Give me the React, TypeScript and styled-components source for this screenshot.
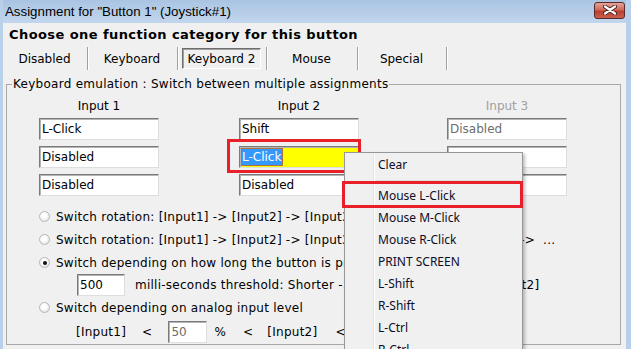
import styled, { createGlobalStyle } from "styled-components";

const Global = createGlobalStyle`
  html, body { margin: 0; padding: 0; background: #f0f0f0; }
  * { box-sizing: border-box; }
`;

const UI = `"DejaVu Sans", sans-serif`;

const Window = styled.div`
  position: relative;
  width: 631px;
  height: 349px;
  overflow: hidden;
  display: flex;
  flex-direction: column;
  background: #f0f0f0;
  border-left: 3px solid #b9d0ea;
  border-right: 5px solid #b9d0ea;
  font-family: ${UI};
  font-size: 12px;
  color: #000;
`;

const TitleBar = styled.div`
  height: 23px;
  flex: none;
  display: flex;
  align-items: center;
  justify-content: space-between;
  padding-left: 2px;
  background: linear-gradient(#a9c4e2, #c2d6ee);
  font-family: "Liberation Sans", sans-serif;
  font-size: 13.3px;
`;

const CloseButton = styled.div`
  width: 31px;
  height: 17px;
  margin: 0 1px 3px 0;
  border: 1px solid #5b2a2a;
  border-radius: 3px;
  display: flex;
  align-items: center;
  justify-content: center;
  background: linear-gradient(#e3a497, #cf6a5a 45%, #b9402f 55%, #c9604c);
`;

const Body = styled.div`
  flex: 1;
  display: flex;
  flex-direction: column;
`;

const Heading = styled.div`
  margin: 4px 0 0 6px;
  height: 16px;
  line-height: 16px;
  font-weight: bold;
  font-size: 13px;
  letter-spacing: 0.42px;
`;

const TabRow = styled.div`
  margin-top: 4px;
  height: 23px;
  display: grid;
  grid-template-columns: 85px 90px 89px 91px 89px;
`;

const Tab = styled.div`
  display: flex;
  align-items: center;
  justify-content: center;
  border-right: 1px solid #a0a0a0;
  box-shadow: 1px 0 0 #fff;
  padding: 1px 5px 1px 4px;
`;

const TabFace = styled.div<{ $pressed?: boolean }>`
  width: 100%;
  height: 100%;
  display: flex;
  align-items: center;
  justify-content: center;
  border: 1px solid transparent;
  ${(p) =>
    p.$pressed &&
    `border-color: #6e6e6e #fff #fff #6e6e6e;
     box-shadow: inset 1px 1px 0 #a0a0a0;`}
`;

const Group = styled.fieldset`
  margin: 7px 5px 0 3px;
  padding: 0;
  border: 1px solid #a8a8a8;
  height: 268px;
  min-width: 0;
`;

const Legend = styled.legend`
  margin-left: 5px;
  padding: 0 1px;
  line-height: 14px;
  letter-spacing: 0.27px;
`;

const InputGrid = styled.div`
  margin: 7px 0 0 32px;
  display: grid;
  grid-template-columns: 200px 208px 120px;
  row-gap: 6px;
`;

const ColLabel = styled.div<{ $dim?: boolean }>`
  width: 120px;
  text-align: center;
  height: 16px;
  line-height: 16px;
  margin-bottom: -2px;
  color: ${(p) => (p.$dim ? "#a0a0a0" : "#000")};
`;

const Field = styled.div<{ $w?: number; $bg?: string; $dim?: boolean }>`
  width: ${(p) => p.$w ?? 120}px;
  height: 22px;
  border: 1px solid;
  border-color: #7a7a7a #dedede #dedede #7a7a7a;
  box-shadow: inset 1px 1px 0 #b4b4b4;
  background: ${(p) => p.$bg ?? "#fff"};
  color: ${(p) => (p.$dim ? "#6d6d6d" : "#000")};
  padding-left: 2px;
  line-height: 20px;
  letter-spacing: 0;
  white-space: nowrap;
  overflow: hidden;
`;

const Selected = styled.span`
  background: #3399ff;
  color: #fff;
  padding: 1px 1px 1px 0;
  outline: 1px solid #b07040;
`;

const Options = styled.div`
  margin: 9px 0 0 32px;
  display: flex;
  flex-direction: column;
  letter-spacing: 0.25px;
`;

const OptionRow = styled.div<{ $h?: number; $indent?: number; $top?: number }>`
  height: ${(p) => p.$h ?? 23}px;
  margin-top: ${(p) => p.$top ?? 0}px;
  display: flex;
  align-items: center;
  padding-left: ${(p) => p.$indent ?? 0}px;
  white-space: pre;
`;

const Radio = styled.span<{ $on?: boolean }>`
  position: relative;
  flex: none;
  width: 11px;
  height: 11px;
  margin-right: 6px;
  border-radius: 50%;
  border: 1px solid #b8b8b8;
  background: radial-gradient(circle at 45% 40%, #fff 30%, #e2e2e2 80%);
  &::after {
    content: "";
    display: ${(p) => (p.$on ? "block" : "none")};
    position: absolute;
    left: 2.5px;
    top: 2.5px;
    width: 4px;
    height: 4px;
    border-radius: 50%;
    background: #111;
  }
`;

const Token = styled.span<{ $ml?: number }>`
  margin-left: ${(p) => p.$ml ?? 0}px;
  flex: none;
`;

const Menu = styled.div`
  position: absolute;
  left: 341px;
  top: 152px;
  width: 179px;
  height: 220px;
  background: #f0f0f0;
  border: 1px solid #979797;
  box-shadow: 2px 2px 3px rgba(0, 0, 0, 0.25);
  padding: 1px 0;
  font-family: "Noto Sans", sans-serif;
  font-size: 12px;
  color: #0d0d25;
  &::before {
    content: "";
    position: absolute;
    left: 28px;
    top: 1px;
    bottom: 0;
    width: 1px;
    background: #e2e3e3;
    box-shadow: 1px 0 0 #fff;
  }
`;

const MenuItem = styled.div`
  height: 22px;
  line-height: 22px;
  padding-left: 33px;
`;

const MenuSep = styled.div`
  height: 9px;
  display: flex;
  align-items: center;
  padding-left: 31px;
  &::after {
    content: "";
    flex: 1;
    margin-right: 2px;
    border-top: 1px solid #e0e0e0;
    border-bottom: 1px solid #fff;
  }
`;

const Highlight = styled.div<{ $x: number; $y: number; $w: number; $h: number }>`
  position: absolute;
  left: ${(p) => p.$x}px;
  top: ${(p) => p.$y}px;
  width: ${(p) => p.$w}px;
  height: ${(p) => p.$h}px;
  border: 3px solid #e8202a;
  pointer-events: none;
`;

const menuItems = [
  "Mouse L-Click",
  "Mouse M-Click",
  "Mouse R-Click",
  "PRINT SCREEN",
  "L-Shift",
  "R-Shift",
  "L-Ctrl",
  "R-Ctrl",
];

export default function App() {
  return (
    <Window>
      <Global />
      <TitleBar>
        <span>Assignment for "Button 1" (Joystick#1)</span>
        <CloseButton>
          <svg width="14" height="10" viewBox="0 0 14 10">
            <path d="M2 1.5 L12 8.5 M12 1.5 L2 8.5" stroke="#4a2020" strokeWidth="4" strokeLinecap="round" />
            <path d="M2 1.5 L12 8.5 M12 1.5 L2 8.5" stroke="#fff" strokeWidth="2.2" strokeLinecap="round" />
          </svg>
        </CloseButton>
      </TitleBar>
      <Body>
        <Heading>Choose one function category for this button</Heading>
        <TabRow>
          <Tab><TabFace>Disabled</TabFace></Tab>
          <Tab><TabFace>Keyboard</TabFace></Tab>
          <Tab><TabFace $pressed>Keyboard 2</TabFace></Tab>
          <Tab><TabFace>Mouse</TabFace></Tab>
          <Tab><TabFace>Special</TabFace></Tab>
        </TabRow>
        <Group>
          <Legend>Keyboard emulation : Switch between multiple assignments</Legend>
          <InputGrid>
            <ColLabel>Input 1</ColLabel>
            <ColLabel>Input 2</ColLabel>
            <ColLabel $dim>Input 3</ColLabel>
            <Field>L-Click</Field>
            <Field>Shift</Field>
            <Field $dim>Disabled</Field>
            <Field>Disabled</Field>
            <Field $bg="#ffff00">
              <Selected>L-Click</Selected>
            </Field>
            <Field />
            <Field>Disabled</Field>
            <Field>Disabled</Field>
            <Field />
          </InputGrid>
          <Options>
            <OptionRow>
              <Radio />
              Switch rotation: [Input1] -&gt; [Input2] -&gt; [Input3] -&gt; [Input1]
            </OptionRow>
            <OptionRow>
              <Radio />
              Switch rotation: [Input1] -&gt; [Input2] -&gt; [Input3] -&gt; [Input2] -&gt; [Input1]
              <Token $ml={19}>-&gt;  ...</Token>
            </OptionRow>
            <OptionRow>
              <Radio $on />
              Switch depending on how long the button is pressed
            </OptionRow>
            <OptionRow $h={22} $indent={38}>
              <Field $w={48}>500</Field>
              <Token $ml={10}>milli-seconds threshold: Shorter -&gt; [Input1],  Longer -&gt;  [Input2]</Token>
            </OptionRow>
            <OptionRow>
              <Radio />
              Switch depending on analog input level
            </OptionRow>
            <OptionRow $h={22} $indent={37} $top={2}>
              <Token>[Input1]</Token>
              <Token $ml={16}>&lt;</Token>
              <Token $ml={16}>
                <Field $w={39} $dim>50</Field>
              </Token>
              <Token $ml={7}>%</Token>
              <Token $ml={17}>&lt;</Token>
              <Token $ml={14}>[Input2]</Token>
              <Token $ml={18}>&lt;</Token>
            </OptionRow>
          </Options>
        </Group>
      </Body>
      <Highlight $x={224} $y={139} $w={134} $h={34} />
      <Menu>
        <MenuItem>Clear</MenuItem>
        <MenuSep />
        {menuItems.map((m) => (
          <MenuItem key={m}>{m}</MenuItem>
        ))}
      </Menu>
      <Highlight $x={339} $y={181} $w={181} $h={27} />
    </Window>
  );
}
